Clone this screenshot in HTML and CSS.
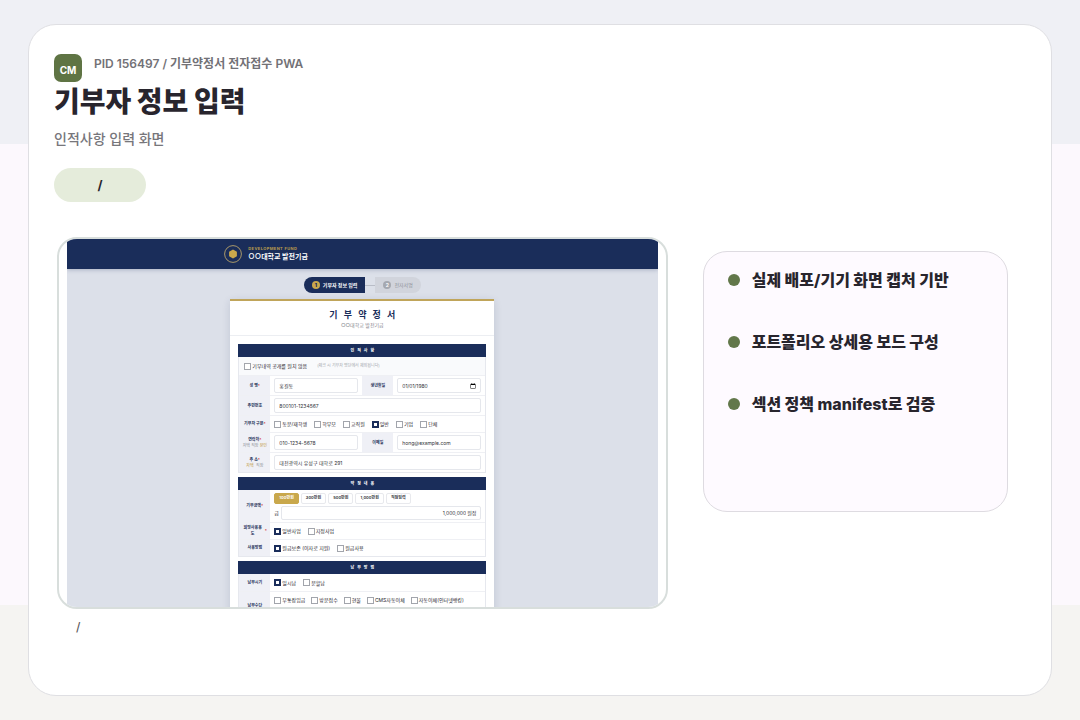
FILE: index.html
```html
<!DOCTYPE html>
<html lang="ko">
<head>
  <meta charset="UTF-8">
  <title>기부자 정보 입력</title>
  <meta name="viewport" content="width=device-width, initial-scale=1.0">
  <link rel="stylesheet" href="styles.css">
</head>
<body>

  <main class="board">
    <header class="board-head">
      <div class="brand">
        <span class="logo">CM</span>
        <span class="project">PID 156497 / 기부약정서 전자접수 PWA</span>
      </div>
      <h1>기부자 정보 입력</h1>
      <p class="subtitle">인적사항 입력 화면</p>
      <span class="chip">/</span>
    </header>

    <div class="content">
      <figure class="preview">
        <div class="frame">
          <div class="screen">
            <div class="fund-bar">
              <div class="fund-inner">
                <svg class="emblem" viewBox="0 0 18 18">
                  <circle cx="9" cy="9" r="8.4" fill="none" stroke="#a9986a" stroke-width="1"/>
                  <path d="M9 4.6 12.9 6.8V11.2L9 13.4 5.1 11.2V6.8Z" fill="#c9a84c"/>
                </svg>
                <div>
                  <p class="fund-en">DEVELOPMENT FUND</p>
                  <p class="fund-name">○○대학교 발전기금</p>
                </div>
              </div>
            </div>

            <div class="steps">
              <span class="step active"><b>1</b>기부자 정보 입력</span>
              <span class="step-line"></span>
              <span class="step"><b>2</b>전자서명</span>
            </div>

            <form class="paper">
              <div class="paper-head">
                <h2>기 부 약 정 서</h2>
                <p>○○대학교 발전기금</p>
              </div>

              <section class="group">
                <h3>인 적 사 항</h3>
                <div class="notice">
                  <label class="check"><input type="checkbox">기부내역 공개를 원치 않음</label>
                  <span class="hint">(체크 시 기부자 명단에서 제외됩니다)</span>
                </div>
                <div class="row pair">
                  <label class="name" for="donor"><span>성 명<i>*</i></span></label>
                  <div class="field"><input class="text" id="donor" type="text" value="홍길동"></div>
                  <label class="name" for="birth">생년월일</label>
                  <div class="field"><input class="text" id="birth" type="date" value="1980-01-01"></div>
                </div>
                <div class="row">
                  <label class="name" for="rrn">주민번호</label>
                  <div class="field"><input class="text" id="rrn" type="text" value="800101-1234567"></div>
                </div>
                <div class="row short">
                  <span class="name"><span>기부자 구분<i>*</i></span></span>
                  <div class="field checks">
                    <label class="check"><input type="checkbox">동문/재학생</label>
                    <label class="check"><input type="checkbox">학부모</label>
                    <label class="check"><input type="checkbox">교직원</label>
                    <label class="check"><input type="checkbox" checked>일반</label>
                    <label class="check"><input type="checkbox">기업</label>
                    <label class="check"><input type="checkbox">단체</label>
                  </div>
                </div>
                <div class="row pair">
                  <label class="name" for="phone"><span>연락처<i>*</i></span><small>자택 직장 <em>본인</em></small></label>
                  <div class="field"><input class="text" id="phone" type="text" value="010-1234-5678"></div>
                  <label class="name" for="mail">이메일</label>
                  <div class="field"><input class="text" id="mail" type="text" value="hong@example.com"></div>
                </div>
                <div class="row">
                  <label class="name" for="addr"><span>주 소<i>*</i></span><small><em>자택</em>&nbsp; 직장</small></label>
                  <div class="field"><input class="text" id="addr" type="text" value="대전광역시 유성구 대학로 291"></div>
                </div>
              </section>

              <section class="group">
                <h3>약 정 내 용</h3>
                <div class="row tall">
                  <label class="name" for="amount"><span>기부금액<i>*</i></span></label>
                  <div class="field stack">
                    <div class="amounts">
                      <button type="button" class="on">100만원</button>
                      <button type="button">300만원</button>
                      <button type="button">500만원</button>
                      <button type="button">1,000만원</button>
                      <button type="button">직접입력</button>
                    </div>
                    <div class="money">
                      <span>금</span>
                      <div class="text money-box"><input id="amount" type="text" value="1,000,000"><span>원정</span></div>
                    </div>
                  </div>
                </div>
                <div class="row short">
                  <span class="name wrap"><span>희망사용용도</span><i>*</i></span>
                  <div class="field checks">
                    <label class="check"><input type="checkbox" checked>일반사업</label>
                    <label class="check"><input type="checkbox">지정사업</label>
                  </div>
                </div>
                <div class="row short">
                  <span class="name">사용방법</span>
                  <div class="field checks">
                    <label class="check"><input type="checkbox" checked>원금보존 (이자로 지원)</label>
                    <label class="check"><input type="checkbox">원금사용</label>
                  </div>
                </div>
              </section>

              <section class="group">
                <h3>납 부 방 법</h3>
                <div class="row short">
                  <span class="name">납부시기</span>
                  <div class="field checks">
                    <label class="check"><input type="checkbox" checked>일시납</label>
                    <label class="check"><input type="checkbox">분할납</label>
                  </div>
                </div>
                <div class="row methods">
                  <span class="name">납부수단</span>
                  <div class="field checks">
                    <label class="check"><input type="checkbox">무통장입금</label>
                    <label class="check"><input type="checkbox">방문접수</label>
                    <label class="check"><input type="checkbox">현물</label>
                    <label class="check"><input type="checkbox">CMS자동이체</label>
                    <label class="check"><input type="checkbox">자동이체(인터넷뱅킹)</label>
                  </div>
                </div>
              </section>
            </form>
          </div>
        </div>
        <figcaption>/</figcaption>
      </figure>

      <ul class="points">
        <li>실제 배포/기기 화면 캡처 기반</li>
        <li>포트폴리오 상세용 보드 구성</li>
        <li>섹션 정책 manifest로 검증</li>
      </ul>
    </div>
  </main>

</body>
</html>
```
FILE: styles.css
```css
* {
  box-sizing: border-box;
}

body {
  margin: 0;
  padding: 24px 28px;
  min-height: 100vh;
  display: flex;
  font-family: Inter, "Noto Sans CJK KR", sans-serif;
  color: #28252d;
  background: linear-gradient(#eff0f5 20%, #fcf8fd 20%, #fcf8fd 84%, #f5f4f2 84%);
}

h1, h2, h3, p, ul, figure {
  margin: 0;
  padding: 0;
}

.board {
  flex: 1;
  min-width: 0;
  padding: 29px 25px;
  background: #fff;
  border: 1px solid #dfdfe3;
  border-radius: 28px;
}

/* heading */
.brand {
  display: flex;
  gap: 12px;
}

.logo {
  width: 28px;
  height: 28px;
  padding-top: 4px;
  border-radius: 7px;
  background: #5f7444;
  color: #fff;
  font-size: 10px;
  font-weight: 700;
  line-height: 25px;
  text-align: center;
}

.project {
  font-size: 12px;
  font-weight: 600;
  line-height: 19px;
  color: #727176;
}

h1 {
  font-size: 28px;
  font-weight: 900;
  line-height: 40px;
}

.subtitle {
  margin-top: 7px;
  font-size: 14px;
  font-weight: 500;
  line-height: 20px;
  color: #77767b;
}

.chip {
  display: block;
  width: 92px;
  margin-top: 19px;
  border-radius: 17px;
  background: #e5ecdb;
  font-size: 13px;
  font-weight: 700;
  line-height: 34px;
  text-align: center;
}

.content {
  display: grid;
  grid-template-columns: 2fr 1fr;
  align-items: start;
  gap: 35px;
  padding: 35px 18px 0 3px;
}

.preview {
  min-width: 0;
}

.frame {
  aspect-ratio: 611 / 372;
  padding: 0 8px;
  overflow: hidden;
  border: 2px solid #d8dedc;
  border-radius: 20px;
}

figcaption {
  padding: 8px 19px;
  font-size: 12px;
  font-weight: 500;
  line-height: 20px;
  color: #5c5b60;
}

.points {
  display: grid;
  align-content: start;
  gap: 38px;
  min-height: 261px;
  margin-top: 14px;
  padding: 16px 24px;
  list-style: none;
  background: #fefaff;
  border: 1px solid #dedbe1;
  border-radius: 24px;
}

.points li {
  display: flex;
  align-items: center;
  gap: 12px;
  font-size: 16px;
  font-weight: 800;
  line-height: 24px;
}

.points li::before {
  content: "";
  width: 12px;
  height: 12px;
  border-radius: 50%;
  background: #62774a;
}

/* donation form screen */
.screen {
  height: 100%;
  overflow: hidden;
  background: #dce0e9;
  font-size: 5px;
  line-height: 8px;
}

.fund-bar {
  background: #1a2d5a;
  box-shadow: 0 1px 4px rgba(26, 45, 90, 0.25);
}

.fund-inner {
  display: flex;
  align-items: center;
  gap: 6px;
  width: 276px;
  height: 30px;
  margin: 0 auto;
}

.emblem {
  width: 18px;
  height: 18px;
}

.fund-en {
  font-size: 4px;
  font-weight: 700;
  line-height: 6px;
  letter-spacing: 0.1em;
  color: #b99c4d;
}

.fund-name {
  font-size: 7px;
  font-weight: 700;
  line-height: 10px;
  color: #fff;
}

.steps {
  display: flex;
  justify-content: center;
  align-items: center;
  padding: 8px 0 6px;
}

.step {
  display: flex;
  align-items: center;
  gap: 3px;
  height: 16px;
  padding: 0 8px;
  border-radius: 0 8px 8px 0;
  background: #d1d4dc;
  color: #8d9098;
}

.step.active {
  border-radius: 8px 0 0 8px;
  background: #1a2d5a;
  color: #fff;
  font-weight: 700;
}

.step b {
  width: 8px;
  border-radius: 50%;
  background: #a5a8b0;
  color: #fff;
  text-align: center;
}

.step.active b {
  background: #c9a84c;
  color: #1a2d5a;
}

.step-line {
  width: 10px;
  height: 1px;
  background: #b9bdc7;
}

.paper {
  width: 264px;
  margin: 0 auto;
  background: #fff;
  border-top: 2px solid #c0a55a;
  box-shadow: 0 2px 8px rgba(26, 45, 90, 0.14);
}

.paper-head {
  padding: 7px 0 6px;
  border-bottom: 1px solid #eceef2;
  text-align: center;
  color: #7f828a;
}

h2 {
  font-size: 9px;
  font-weight: 700;
  line-height: 13px;
  word-spacing: 4px;
  color: #1a2d5a;
}

.group {
  margin: 8px 8px 0;
  border: 1px solid #e6e8ee;
  border-top: 0;
}

.group + .group {
  margin-top: 4px;
}

h3 {
  margin: 0 -1px;
  background: #1a2d5a;
  color: #fff;
  font-size: 4px;
  font-weight: 700;
  line-height: 13px;
  word-spacing: 2px;
  text-align: center;
}

.notice {
  display: flex;
  align-items: center;
  gap: 10px;
  height: 18px;
  padding: 0 5px;
  background: #f9fafc;
}

.hint {
  font-size: 4px;
  color: #a3a6ad;
}

.row {
  display: grid;
  grid-template-columns: 31px 1fr;
  height: 20px;
  border-top: 1px solid #eff0f4;
}

.row.pair {
  grid-template-columns: 31px 1fr 31px 1fr;
}

.row.short {
  height: 17px;
}

.row.tall {
  height: 32px;
}

.row.methods {
  height: 28px;
}

h3 + .row {
  border-top: 0;
}

.name {
  display: flex;
  flex-direction: column;
  justify-content: center;
  background: #eff0f6;
  color: #26335a;
  font-size: 4px;
  font-weight: 700;
  line-height: 6px;
  text-align: center;
}

.name i {
  color: #d43b3b;
  font-style: normal;
}

.name small {
  font-size: 4px;
  font-weight: 400;
  line-height: 5px;
  color: #8d9098;
}

.name em {
  color: #c0963a;
  font-style: normal;
}

.name.wrap {
  flex-direction: row;
  align-items: center;
  gap: 2px;
}

.name.wrap span {
  width: 20px;
}

.field {
  display: flex;
  align-items: center;
  min-width: 0;
  padding: 0 4px;
}

.text {
  width: 100%;
  min-width: 0;
  height: 15px;
  padding: 0 4px;
  background: #fff;
  border: 1px solid #e5e7ec;
  border-radius: 2px;
  color: #303238;
  font: inherit;
}

.text::-webkit-datetime-edit,
.text::-webkit-datetime-edit-fields-wrapper,
.text::-webkit-datetime-edit-month-field,
.text::-webkit-datetime-edit-day-field,
.text::-webkit-datetime-edit-year-field {
  padding: 0;
}

.text::-webkit-calendar-picker-indicator {
  width: 6px;
  height: 6px;
  padding: 0;
}

.checks {
  gap: 7px;
}

.methods .checks {
  align-items: flex-start;
  gap: 6px;
  padding-top: 4px;
}

.check {
  display: flex;
  align-items: center;
  gap: 1px;
  white-space: nowrap;
}

.check input {
  appearance: none;
  width: 7px;
  height: 7px;
  margin: 0;
  background: #fff;
  border: 1px solid #a2a5ac;
}

.check input:checked {
  border: 2px solid #1a2d5a;
}

.stack {
  flex-direction: column;
  align-items: stretch;
  justify-content: center;
  gap: 2px;
}

.amounts {
  display: flex;
  gap: 2px;
}

.amounts button {
  height: 11px;
  padding: 0 4px;
  background: #fff;
  border: 1px solid #e8e9ed;
  border-radius: 2px;
  color: #3a3d45;
  font: 700 4px/8px Inter, "Noto Sans CJK KR", sans-serif;
}

.amounts .on {
  background: #c9a84c;
  border-color: #c9a84c;
  color: #fff;
}

.money {
  display: flex;
  align-items: center;
  gap: 2px;
}

.money-box {
  display: flex;
  align-items: center;
  gap: 1px;
  height: 14px;
}

.money-box input {
  flex: 1;
  min-width: 0;
  padding: 0;
  border: 0;
  color: inherit;
  font: inherit;
  text-align: right;
}
```
